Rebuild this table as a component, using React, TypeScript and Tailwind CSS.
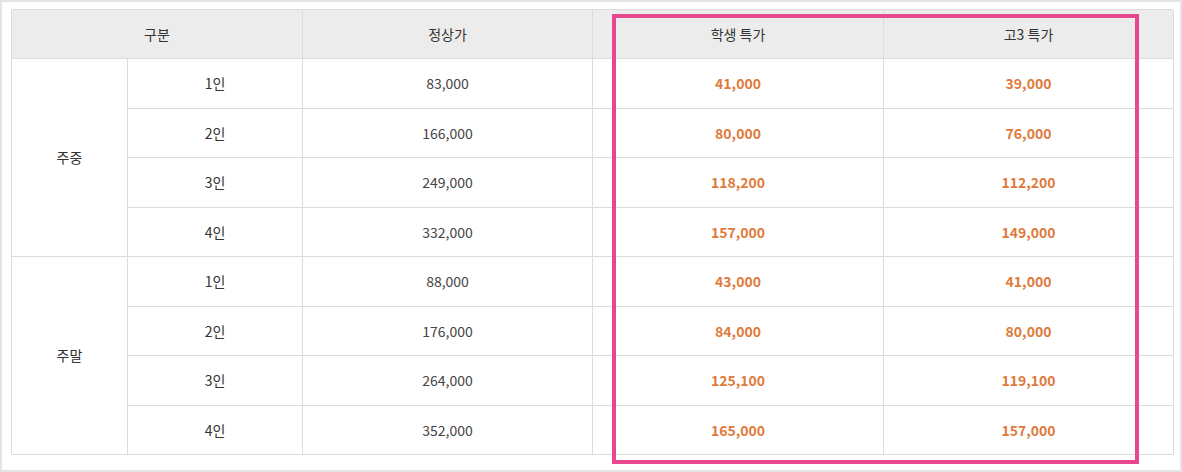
import React from 'react';

interface PriceRow {
  people: string;
  regular: string;
  student: string;
  senior: string;
}

const weekday: PriceRow[] = [
  { people: '1인', regular: '83,000', student: '41,000', senior: '39,000' },
  { people: '2인', regular: '166,000', student: '80,000', senior: '76,000' },
  { people: '3인', regular: '249,000', student: '118,200', senior: '112,200' },
  { people: '4인', regular: '332,000', student: '157,000', senior: '149,000' },
];

const weekend: PriceRow[] = [
  { people: '1인', regular: '88,000', student: '43,000', senior: '41,000' },
  { people: '2인', regular: '176,000', student: '84,000', senior: '80,000' },
  { people: '3인', regular: '264,000', student: '125,100', senior: '119,100' },
  { people: '4인', regular: '352,000', student: '165,000', senior: '157,000' },
];

const cell = 'flex items-center justify-center border-r border-b border-[#dcdcdc]';

const Group: React.FC<{ label: string; rows: PriceRow[] }> = ({ label, rows }) => (
  <>
    <div className={`${cell} row-span-4 text-[#333]`}>{label}</div>
    {rows.map((r) => (
      <React.Fragment key={r.people}>
        <div className={`${cell} text-[#333]`}>{r.people}</div>
        <div className={`${cell} text-[#444]`}>{r.regular}</div>
        <div className={`${cell} font-bold text-[#e07a3c]`}>{r.student}</div>
        <div className={`${cell} font-bold text-[#e07a3c]`}>{r.senior}</div>
      </React.Fragment>
    ))}
  </>
);

const App: React.FC = () => {
  return (
    <div
      className="relative w-[1182px] h-[472px] bg-white border-2 border-[#e4e4e4] text-[14px]"
      style={{ fontFamily: '"Noto Sans CJK KR", "Noto Sans", sans-serif' }}
    >
      <div className="ml-[9px] mt-[7px] w-[1162px] grid grid-cols-[116px_175px_290px_291px_290px] grid-rows-[49px_50px_49px_50px_49px_50px_49px_50px_49px] border-t border-l border-[#dcdcdc]">
        <div className={`${cell} col-span-2 bg-[#ececec] text-[#333]`}>구분</div>
        <div className={`${cell} bg-[#ececec] text-[#333]`}>정상가</div>
        <div className={`${cell} bg-[#ececec] text-[#333]`}>학생 특가</div>
        <div className={`${cell} bg-[#ececec] text-[#333]`}>고3 특가</div>
        <Group label="주중" rows={weekday} />
        <Group label="주말" rows={weekend} />
      </div>
      <div className="absolute left-[610px] top-[12px] w-[527px] h-[450px] border-4 border-[#e6478d]" />
    </div>
  );
};

export default App;
